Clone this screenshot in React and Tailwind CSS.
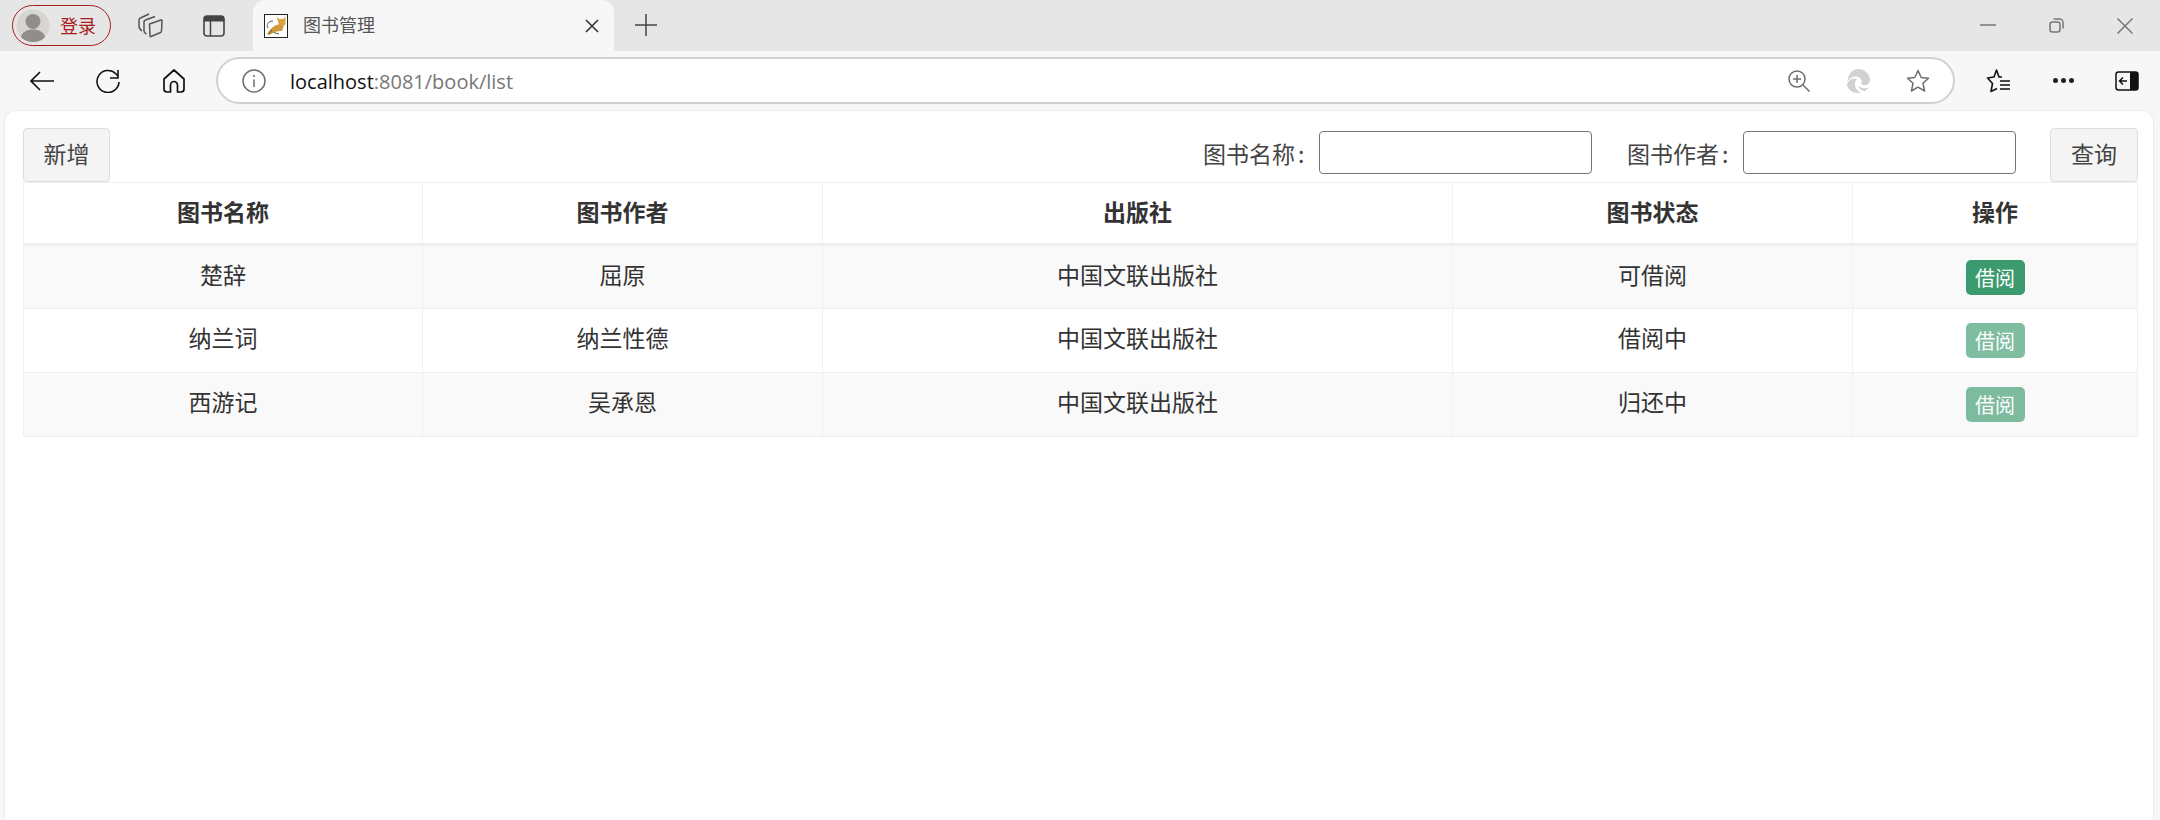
const rows = [
  { name: "楚辞", author: "屈原", press: "中国文联出版社", status: "可借阅", enabled: true },
  { name: "纳兰词", author: "纳兰性德", press: "中国文联出版社", status: "借阅中", enabled: false },
  { name: "西游记", author: "吴承恩", press: "中国文联出版社", status: "归还中", enabled: false },
];

const cjk = { fontFamily: '"Noto Sans CJK SC", "Noto Sans", sans-serif' };

function Avatar() {
  return (
    <svg width="34" height="34" viewBox="0 0 34 34">
      <circle cx="17" cy="17" r="16.5" fill="#d6d5d2" />
      <circle cx="17" cy="12.5" r="7.5" fill="#918d89" />
      <path d="M5 28c1-5 6-7.5 12-7.5S28 23 29 28c-3 3.5-7 5-12 5S8 31.5 5 28z" fill="#918d89" />
    </svg>
  );
}

function Collections() {
  return (
    <svg width="25" height="25" viewBox="0 0 25 25" fill="none" stroke="#555" strokeWidth="1.5" strokeLinejoin="round">
      <path d="M11.5 11L23 7Q24 6.500 24 8L23.500 18Q23.500 19 22.500 19.500L13 23.500Q12 24 12 23Z" />
      <path d="M8.500 21Q6 20 6 18V9Q6 7.500 7.500 7L17 3.500" />
      <path d="M4 18Q1 16 1 13V7Q1 5.500 2.500 5L11 1" />
    </svg>
  );
}

function VerticalTabs() {
  return (
    <svg width="22" height="22" viewBox="0 0 22 22" fill="none">
      <rect x="1" y="1" width="20" height="20" rx="3" stroke="#444" strokeWidth="1.6" />
      <path d="M1 4a3 3 0 0 1 3-3h14a3 3 0 0 1 3 3v2.500H1z" fill="#444" />
      <path d="M7.500 6v15" stroke="#444" strokeWidth="1.5" />
    </svg>
  );
}

function Tomcat() {
  return (
    <svg width="24" height="24" viewBox="0 0 24 24">
      <rect x="0.5" y="0.5" width="23" height="23" fill="#fff" stroke="#222" />
      <path d="M12.500 2.500L15 5H19L21.500 2.500V10L18.500 13.500L15 11Z" fill="#d9a441" />
      <path d="M3 20C6 15 10 11 15 10.500L19.500 13L18 17C14 17 12 17.500 10 18.500L5 21Z" fill="#cf9a3a" />
      <path d="M4 14C2 11 4 7 9 7M5 20L8 16M10 18.500L15 20" fill="none" stroke="#555" strokeWidth="1" />
    </svg>
  );
}

function Edge() {
  return (
    <svg width="24" height="24" viewBox="0 0 24 24" fill="#d2d2d2">
      <path d="M12 0C18.600 0 24 4.800 24 11c0 3.200-2.600 5.200-5.500 5.200-2 0-3.500-.6-3.500-1.400 0-.5.700-.8.700-2.300 0-2.600-2.600-5-6-5-3.800 0-6.800 2.500-8.200 5C2 5.500 6.200 0 12 0z" />
      <path d="M8.500 9.500c-4 0-7 3-7.500 6.500 1 4.500 5.500 8 10.500 8 1.500 0 2.500-.2 3.500-.7-3-.8-6-3.800-6-7.800 0-2 .6-3.900 2-5.500-.8-.3-1.600-.5-2.500-.5z" />
      <path d="M12 16.500c.5 3 3.500 5.500 7 5.500 1.500-.8 3-2.200 3.800-3.700-1.300.6-2.800.9-4.300.9-2.500 0-5-1-6.500-2.700z" />
    </svg>
  );
}

function FavoritesList() {
  return (
    <svg width="26" height="26" viewBox="0 0 26 26" fill="none" stroke="#111" strokeWidth="1.6" strokeLinejoin="round">
      <path d="M16 9H13L10.500 2L8 9L1.500 10L6.500 15.500L5 23.500L11 20.500" />
      <path d="M14 13h10M14 17h10M14 21h10" strokeWidth="1.4" />
    </svg>
  );
}

function Sidebar() {
  return (
    <svg width="24" height="20" viewBox="0 0 24 20" fill="none">
      <rect x="1" y="1" width="22" height="18" rx="2.5" stroke="#111" strokeWidth="1.5" />
      <path d="M15 1h6a2 2 0 0 1 2 2v14a2 2 0 0 1-2 2h-6z" fill="#111" />
      <path d="M12 10H5M8 6.500L4.500 10 8 13.500" stroke="#111" strokeWidth="1.5" />
    </svg>
  );
}

function TitleBar() {
  return (
    <div className="flex h-[51px] bg-[#e6e6e6] shrink-0">
      <div className="ml-3 mt-[5px] flex items-center h-[41px] w-[99px] rounded-full border-[1.5px] border-[#a91c1c] pl-[3px]">
        <Avatar />
        <span className="ml-[10px] text-[18px] text-[#a91c1c]" style={cjk}>登录</span>
      </div>
      <div className="ml-[27px] mt-[13px] h-[25px]"><Collections /></div>
      <div className="ml-[40px] mt-[15px] h-[22px]"><VerticalTabs /></div>
      <div className="ml-[28px] flex w-[361px] h-[51px] items-center rounded-t-[12px] bg-[#f7f7f7] pl-[11px]">
        <Tomcat />
        <span className="ml-[15px] pb-[2px] text-[18px] text-[#555]" style={cjk}>图书管理</span>
        <svg className="ml-[210px]" width="14" height="14" viewBox="0 0 14 14" stroke="#333" strokeWidth="1.6"><path d="M1 1l12 12M13 1L1 13" /></svg>
      </div>
      <svg className="ml-[21px] mt-[14px]" width="22" height="22" viewBox="0 0 22 22" stroke="#444" strokeWidth="1.5"><path d="M11 0v22M0 11h22" /></svg>
      <div className="ml-auto flex items-start">
        <svg className="mt-[24px]" width="16" height="2" viewBox="0 0 16 2"><path d="M0 1h16" stroke="#777" strokeWidth="1.5" /></svg>
        <svg className="ml-[53px] mt-[18px]" width="15" height="15" viewBox="0 0 15 15" fill="none" stroke="#777" strokeWidth="1.5"><rect x="1" y="4" width="10" height="10" rx="2.5" /><path d="M4.500 1h6A3.500 3.500 0 0 1 14 4.500v6" /></svg>
        <svg className="ml-[53px] mr-[27px] mt-[18px]" width="16" height="16" viewBox="0 0 16 16" stroke="#777" strokeWidth="1.5"><path d="M.5.500l15 15M15.500.500l-15 15" /></svg>
      </div>
    </div>
  );
}

function ToolBar() {
  return (
    <div className="flex h-[59px] items-center bg-[#f7f7f7] shrink-0">
      <svg className="ml-[30px]" width="24" height="20" viewBox="0 0 24 20" fill="none" stroke="#111" strokeWidth="1.6"><path d="M24 10H1M10 1l-9 9 9 9" /></svg>
      <svg className="ml-[42px]" width="24" height="24" viewBox="0 0 24 24" fill="none" stroke="#111" strokeWidth="1.6"><path d="M23 13A11 11 0 1 1 19.800 4.700L22 7" /><path d="M22 1v8h-8" /></svg>
      <svg className="ml-[43px]" width="22" height="24" viewBox="0 0 22 24" fill="none" stroke="#111" strokeWidth="1.7" strokeLinejoin="round"><path d="M11 1L1 10v10a3 3 0 0 0 3 3h3.500v-7a3.500 3.500 0 0 1 7 0v7H18a3 3 0 0 0 3-3V10z" /></svg>
      <div className="ml-[31px] flex h-[47px] w-[1739px] items-center rounded-full border-2 border-[#d0d0d0] bg-white">
        <svg className="ml-[24px]" width="24" height="24" viewBox="0 0 24 24" fill="none" stroke="#6e6e6e" strokeWidth="1.5"><circle cx="12" cy="12" r="11" /><path d="M12 10.500V18M12 6v2" /></svg>
        <span className="ml-[24px] pt-[3px] text-[20px] text-[#111]" style={{ fontFamily: '"Open Sans", sans-serif' }}>localhost<span className="text-[#777]">:8081/book/list</span></span>
        <svg className="ml-auto" width="22" height="22" viewBox="0 0 22 22" fill="none" stroke="#6e6e6e" strokeWidth="1.5"><circle cx="9" cy="9" r="8" /><path d="M14.800 14.800L21.500 21.500M9 5v8M5 9h8" /></svg>
        <div className="ml-[36px]"><Edge /></div>
        <svg className="ml-[36px] mr-[23px]" width="24" height="24" viewBox="0 0 24 24" fill="none" stroke="#6e6e6e" strokeWidth="1.5" strokeLinejoin="round"><path d="M12 1.500l3.200 7 7.300.8-5.500 5 1.600 7.700L12 18.200 5.400 22 7 14.300l-5.500-5 7.300-.8z" /></svg>
      </div>
      <div className="ml-[31px]"><FavoritesList /></div>
      <div className="ml-[41px] flex gap-[3px]">
        <i className="block h-[5px] w-[5px] rounded-full bg-[#222]" />
        <i className="block h-[5px] w-[5px] rounded-full bg-[#222]" />
        <i className="block h-[5px] w-[5px] rounded-full bg-[#222]" />
      </div>
      <div className="ml-[41px]"><Sidebar /></div>
    </div>
  );
}

function PageButton({ children, className }) {
  return (
    <button className={"h-[54px] rounded-[4px] border border-[#dddddd] bg-[#f4f4f4] pb-[4px] text-[23px] text-[#444] " + className}>
      {children}
    </button>
  );
}

function Field({ label, className }) {
  return (
    <label className={"flex h-[54px] items-center text-[23px] text-[#444] " + className}>
      <span className="w-[116px] pb-[4px]">{label}<span className="ml-[3px]">:</span></span>
      <input className="mb-[5px] h-[43px] w-[273px] rounded-[4px] border border-[#767676] bg-white" />
    </label>
  );
}

function BookTable() {
  return (
    <table className="w-[2114px] table-fixed border-collapse text-center text-[23px] text-[#333]">
      <colgroup>
        <col className="w-[399px]" />
        <col className="w-[400px]" />
        <col className="w-[630px]" />
        <col className="w-[400px]" />
        <col className="w-[285px]" />
      </colgroup>
      <thead>
        <tr className="h-[62px] border-b-[3px] border-[#eeeeee]">
          {["图书名称", "图书作者", "出版社", "图书状态", "操作"].map((h) => (
            <th key={h} className="border-x border-t border-[#f0f0f0] pb-[3px] font-bold">{h}</th>
          ))}
        </tr>
      </thead>
      <tbody>
        {rows.map((r, i) => (
          <tr key={r.name} className={i % 2 === 0 ? "h-[64px] bg-[#f9f9f9]" : "h-[64px] bg-white"}>
            <td className="border border-[#f0f0f0] pb-[6px]">{r.name}</td>
            <td className="border border-[#f0f0f0] pb-[6px]">{r.author}</td>
            <td className="border border-[#f0f0f0] pb-[6px]">{r.press}</td>
            <td className="border border-[#f0f0f0] pb-[6px]">{r.status}</td>
            <td className="border border-[#f0f0f0]">
              <button className={r.enabled ? "block mx-auto h-[35px] w-[59px] rounded-[5px] bg-[#3c9a6f] text-[20px] leading-[33px] text-white" : "block mx-auto h-[35px] w-[59px] rounded-[5px] bg-[#3c9a6f] text-[20px] leading-[33px] text-white opacity-65"}>
                借阅
              </button>
            </td>
          </tr>
        ))}
      </tbody>
    </table>
  );
}

export default function App() {
  return (
    <div className="flex h-screen w-full flex-col bg-[#f7f7f7]" style={cjk}>
      <TitleBar />
      <ToolBar />
      <div className="ml-1 mr-[6px] flex-1 rounded-t-[12px] border border-b-0 border-[#ececec] bg-white pl-[18px] pt-[17px]">
        <div className="flex w-[2115px] items-center">
          <PageButton className="w-[87px]">新增</PageButton>
          <Field label="图书名称" className="ml-auto" />
          <Field label="图书作者" className="ml-[35px]" />
          <div className="ml-[34px]"><PageButton className="w-[88px]">查询</PageButton></div>
        </div>
        <BookTable />
      </div>
    </div>
  );
}
